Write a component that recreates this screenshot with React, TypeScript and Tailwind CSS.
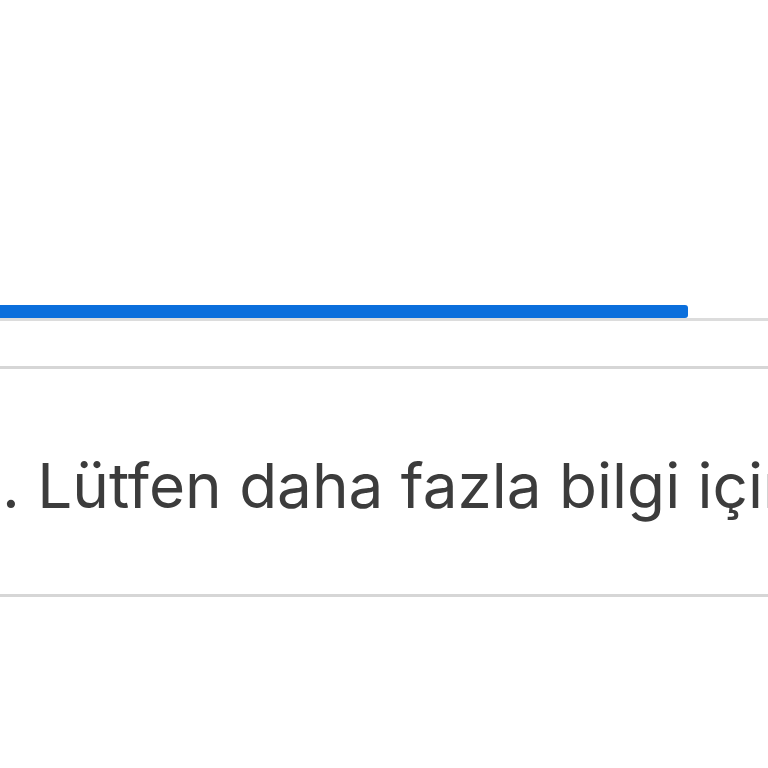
export default function App() {
  return (
    <div className="w-[768px] h-[768px] bg-white overflow-hidden flex flex-col" style={{ fontFamily: 'Inter, "Noto Sans", sans-serif' }}>
      <div className="h-[305px]" />
      {/* tab indicator */}
      <div className="flex border-b-[3px] border-[#dcdcdc]">
        <div className="h-[13px] w-[688px] bg-[#0b6fdc] rounded-r-[3px]" />
      </div>
      <div className="h-[45px]" />
      {/* message row */}
      <div className="border-t-[3px] border-b-[3px] border-[#d6d6d6] h-[231px] flex items-center overflow-hidden">
        <p className="whitespace-nowrap text-[62px] leading-none text-[#3c3c3c] pl-[2px] pt-[8px]">
          . Lütfen daha fazla bilgi için
        </p>
      </div>
    </div>
  );
}
